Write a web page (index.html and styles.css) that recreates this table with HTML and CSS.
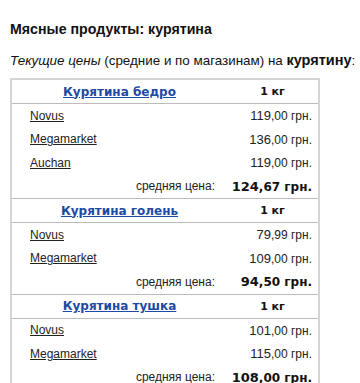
FILE: index.html
```html
<!DOCTYPE html>
<html lang="ru">
<head>
<meta charset="utf-8">
<link rel="stylesheet" href="styles.css">
</head>
<body>
<h1 class="title">Мясные продукты: курятина</h1>
<p class="lead"><em>Текущие цены</em> (средние и по магазинам) на <strong>курятину</strong>:</p>
<table class="prices">
  <tbody>
    <tr class="head"><th class="name"><a href="#">Курятина бедро</a></th><th class="unit">1 кг</th></tr>
    <tr><td class="shop"><a href="#">Novus</a></td><td class="price"><span class="big">119</span>,00 грн.</td></tr>
    <tr><td class="shop"><a href="#">Megamarket</a></td><td class="price"><span class="big">136</span>,00 грн.</td></tr>
    <tr><td class="shop"><a href="#">Auchan</a></td><td class="price"><span class="big">119</span>,00 грн.</td></tr>
    <tr class="avg"><td class="avg-label">средняя цена:</td><td class="avg-price"><span class="big">124</span>,67 грн.</td></tr>

    <tr class="head"><th class="name"><a href="#">Курятина голень</a></th><th class="unit">1 кг</th></tr>
    <tr><td class="shop"><a href="#">Novus</a></td><td class="price"><span class="big">79</span>,99 грн.</td></tr>
    <tr><td class="shop"><a href="#">Megamarket</a></td><td class="price"><span class="big">109</span>,00 грн.</td></tr>
    <tr class="avg"><td class="avg-label">средняя цена:</td><td class="avg-price"><span class="big">94</span>,50 грн.</td></tr>

    <tr class="head"><th class="name"><a href="#">Курятина тушка</a></th><th class="unit">1 кг</th></tr>
    <tr><td class="shop"><a href="#">Novus</a></td><td class="price"><span class="big">101</span>,00 грн.</td></tr>
    <tr><td class="shop"><a href="#">Megamarket</a></td><td class="price"><span class="big">115</span>,00 грн.</td></tr>
    <tr class="avg"><td class="avg-label">средняя цена:</td><td class="avg-price"><span class="big">108</span>,00 грн.</td></tr>
  </tbody>
</table>
</body>
</html>
```
FILE: styles.css
```css
html, body {
  margin: 0;
  padding: 0;
  background: #fff;
}
body {
  padding: 0 10px;
  font-family: "Liberation Sans", Arial, sans-serif;
  color: #111;
}
.title {
  font-size: 14.2px;
  font-weight: bold;
  margin: 19px 0 0 0;
  line-height: 20px;
}
.lead {
  font-size: 13.4px;
  margin: 12px 0 0 0;
  line-height: 18px;
  white-space: nowrap;
}
.lead strong {
  font-size: 14.5px;
}
.prices {
  margin-top: 8px;
  width: 310px;
  border-collapse: collapse;
  border: 2px solid #d4d4d4;
  font-size: 12px;
}
.prices td {
  height: 23.5px;
  padding: 0;
}
.prices th {
  height: 23px;
  padding: 0;
}
.head th {
  border-top: 1px solid #bbb;
  border-bottom: 1px solid #bbb;
}
.head:first-child th {
  border-top: 2px solid #d4d4d4;
}
.name {
  width: 215px;
  text-align: center;
  font-family: "DejaVu Sans", Verdana, sans-serif;
  font-size: 12px;
}
.name a {
  color: #1c4aa5;
  font-weight: bold;
}
.unit {
  text-align: center;
  font-family: "DejaVu Sans", Verdana, sans-serif;
  font-weight: bold;
  font-size: 11px;
}
.shop {
  padding-left: 18px !important;
}
.shop a {
  color: #222;
}
.price {
  text-align: right;
  padding-right: 6px !important;
  font-size: 12px;
  color: #222;
}
.price .big {
  font-size: 13px;
}
.avg-label {
  text-align: right;
  padding-right: 12px !important;
  color: #222;
}
.avg-price {
  text-align: right;
  padding-right: 6px !important;
  font-family: "DejaVu Sans", Verdana, sans-serif;
  font-weight: bold;
  font-size: 12px;
  color: #111;
}
.avg-price .big {
  font-size: 13px;
}
```
